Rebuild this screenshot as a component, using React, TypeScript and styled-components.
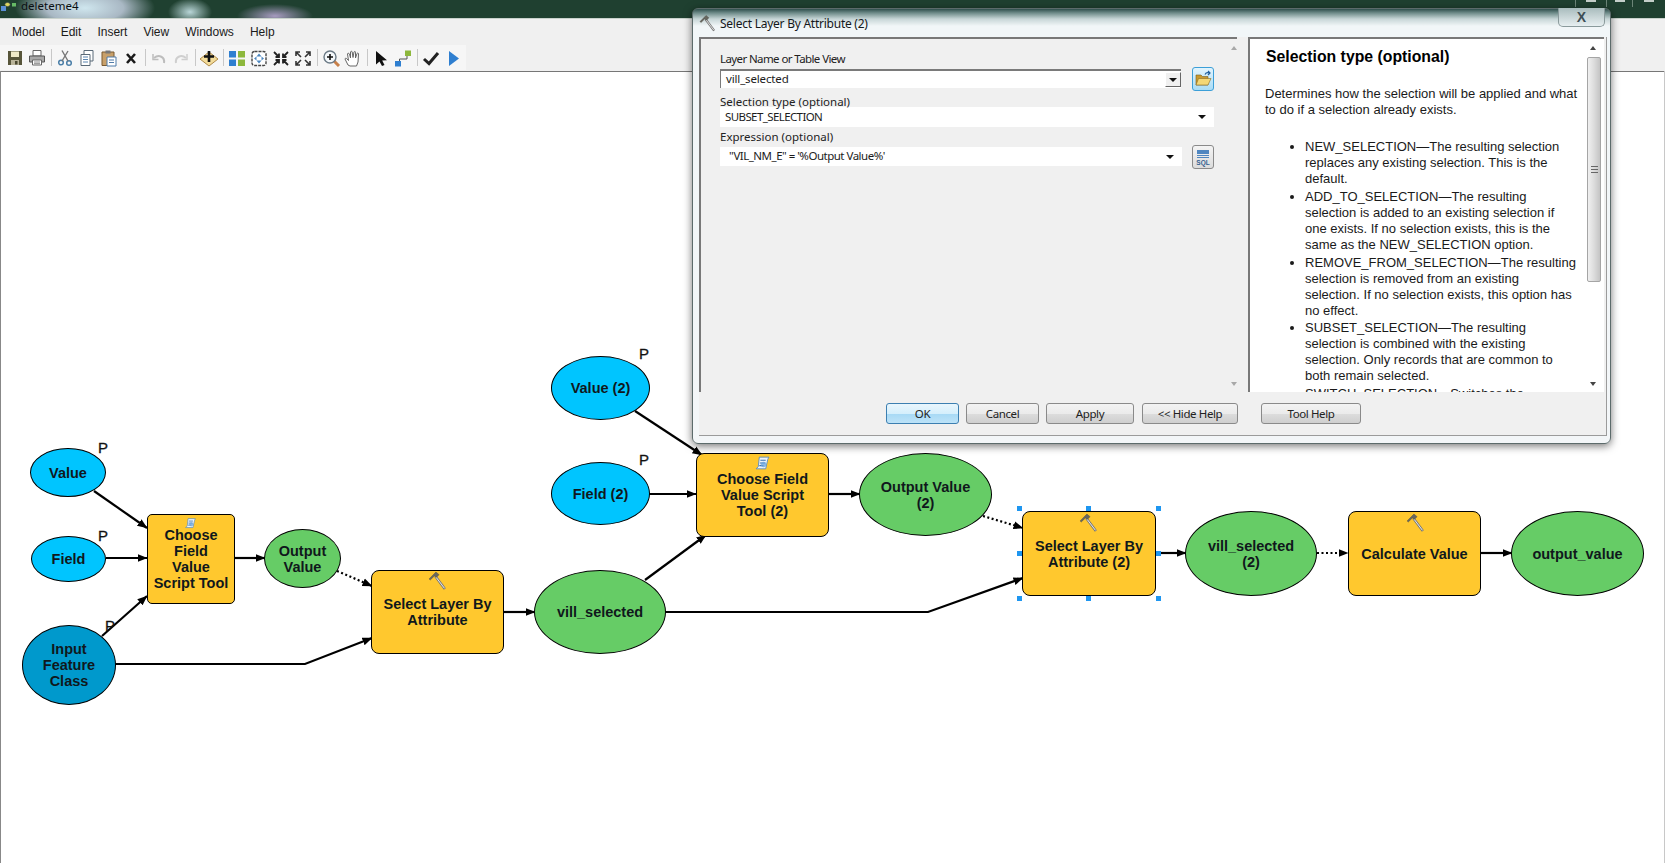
import React from 'react';
import styled, { createGlobalStyle, css } from 'styled-components';

const CANVAS_TOP = 71;

const GlobalStyle = createGlobalStyle`
  html, body { margin: 0; padding: 0; background: #fff; overflow: hidden; }
  body { font-family: "Liberation Sans", Arial, sans-serif; }
`;

const Page = styled.div`
  position: relative;
  width: 1665px;
  height: 863px;
  display: flex;
  flex-direction: column;
  overflow: hidden;
`;

const TitleBar = styled.div`
  height: 18px;
  flex: none;
  display: flex;
  align-items: flex-start;
  border-bottom: 1px solid #c9d2cc;
  background:
    radial-gradient(ellipse 22px 14px at 190px 12px, #b9d6d8 0%, rgba(185, 214, 216, 0) 100%),
    radial-gradient(ellipse 38px 12px at 275px 16px, #a79bc0 0%, rgba(167, 155, 192, 0) 100%),
    radial-gradient(ellipse 70px 26px at 85px 8px, #cfe6ee 0%, #a9b8c4 55%, rgba(90, 120, 110, 0) 100%),
    #1f4030;
`;

const AppIcon = styled.svg`
  width: 17px;
  height: 12px;
  margin-left: 1px;
  flex: none;
`;

const TitleText = styled.span`
  font: 11.5px/12px "Noto Sans", sans-serif;
  margin-left: 3px;
  color: #0a0f12;
`;

const WinControls = styled.div`
  margin-left: auto;
  display: flex;
  height: 7px;
`;

const WinControl = styled.div<{ $w: number }>`
  width: ${p => p.$w}px;
  border-left: 1px solid #6c8578;
  display: flex;
  justify-content: center;
`;

const WinGlyph = styled.div`
  width: 10px;
  height: 2px;
  background: #c4cec9;
`;

const MenuBar = styled.div`
  height: 26px;
  flex: none;
  background: #f0f0f0;
  display: flex;
  align-items: center;
  padding-left: 12px;
  gap: 16px;
  font: 12px "Liberation Sans", Arial, sans-serif;
  color: #1a1a1a;
`;

const ToolBar = styled.div`
  height: 26px;
  flex: none;
  background: #f0f0f0;
  display: flex;
`;

const ToolStrip = styled.div`
  display: flex;
  align-items: center;
  height: 25px;
  padding: 0 4px;
  width: 466px;
  box-sizing: border-box;
  background: #f6f6f6;
`;

const ToolIcon = styled.svg`
  width: 22px;
  height: 18px;
  flex: none;
`;

const ToolSep = styled.div`
  width: 6px;
  height: 17px;
  flex: none;
  background: linear-gradient(#c8c8c8, #c8c8c8) center / 1px 100% no-repeat;
`;

const Canvas = styled.div`
  position: relative;
  flex: 1;
  background: #fff;
  box-shadow: inset 1px 0 #888, inset -1px 0 #c8c8c8, inset 0 1px #767676;
`;

const Wires = styled.svg`
  position: absolute;
  left: 0;
  top: 0;
  width: 1665px;
  height: 792px;
`;

const nodeColors = {
  param: '#00c5ff',
  input: '#0099cc',
  output: '#66cc66',
  tool: '#ffc82e',
};

interface BoxProps {
  $x: number;
  $y: number;
  $w: number;
  $h: number;
}

const placed = css<BoxProps>`
  position: absolute;
  left: ${p => p.$x}px;
  top: ${p => p.$y - CANVAS_TOP}px;
  width: ${p => p.$w}px;
  height: ${p => p.$h}px;
`;

const Node = styled.div<BoxProps & { $kind: keyof typeof nodeColors; $round: string }>`
  ${placed}
  box-sizing: border-box;
  display: flex;
  align-items: center;
  justify-content: center;
  text-align: center;
  white-space: pre-line;
  border: 1px solid #000;
  border-radius: ${p => p.$round};
  background: ${p => nodeColors[p.$kind]};
  font: bold 14.5px/16px "Liberation Sans", Arial, sans-serif;
  color: #10181c;
`;

const PMark = styled.span<{ $x: number; $y: number }>`
  position: absolute;
  left: ${p => p.$x}px;
  top: ${p => p.$y - CANVAS_TOP}px;
  font: 15px/14px "Liberation Sans", Arial, sans-serif;
  -webkit-text-stroke: 0.3px #111;
  color: #111;
`;

const NodeGlyph = styled.svg<{ $x: number; $y: number; $s: number }>`
  position: absolute;
  left: ${p => p.$x - p.$s / 2}px;
  top: ${p => p.$y - CANVAS_TOP - p.$s / 2}px;
  width: ${p => p.$s}px;
  height: ${p => p.$s}px;
`;

const Handle = styled.div<{ $x: number; $y: number }>`
  position: absolute;
  left: ${p => p.$x - 2.5}px;
  top: ${p => p.$y - CANVAS_TOP - 2.5}px;
  width: 5px;
  height: 5px;
  background: #1e96f0;
`;

const Dialog = styled.div`
  position: absolute;
  left: 692px;
  top: 8px;
  width: 919px;
  height: 436px;
  box-sizing: border-box;
  border: 1px solid #5c6b6b;
  border-radius: 6px;
  padding: 0 3px 7px 6px;
  display: flex;
  flex-direction: column;
  box-shadow: 0 2px 8px rgba(0, 0, 0, 0.55);
  background: linear-gradient(#2f4f4c 0, #6f8c8a 4px, #c7d6d7 10px, #f1f6f8 17px, #f3f6f8 100%);
`;

const DialogTitle = styled.div`
  height: 28px;
  flex: none;
  display: flex;
  align-items: center;
  font: 12px "Noto Sans", sans-serif;
  letter-spacing: -0.25px;
  color: #14181a;
  gap: 4px;
`;

const TitleHammer = styled.svg`
  width: 17px;
  height: 18px;
  flex: none;
`;

const CloseButton = styled.div`
  position: absolute;
  left: 865px;
  top: -1px;
  width: 47px;
  height: 19px;
  box-sizing: border-box;
  border: 1px solid #8a9a9c;
  border-top: none;
  border-radius: 0 0 5px 5px;
  background: linear-gradient(#a9bcbd, #e7eff1);
  display: flex;
  align-items: center;
  justify-content: center;
  font: bold 14px/1 "Liberation Sans", Arial, sans-serif;
  color: #3e4e55;
`;

const DialogBody = styled.div`
  flex: 1;
  display: flex;
  flex-direction: column;
  background: #f0f0f0;
  border-bottom: 1px solid #9b9b9b;
  border-right: 1px solid #9b9b9b;
  box-sizing: border-box;
`;

const Panels = styled.div`
  height: 355px;
  flex: none;
  display: flex;
`;

const FormPane = styled.div`
  width: 538px;
  flex: none;
  display: flex;
  box-sizing: border-box;
  border-top: 2px solid #787878;
  border-left: 2px solid #787878;
`;

const Form = styled.div`
  flex: 1;
  padding: 13px 0 0 19px;
  font: 11.5px "Noto Sans", sans-serif;
  color: #222;
`;

const FieldLabel = styled.div<{ $gap: number; $track?: number }>`
  position: relative;
  z-index: 1;
  height: 14px;
  line-height: 14px;
  margin-top: ${p => p.$gap}px;
  letter-spacing: ${p => p.$track ?? 0}px;
`;

const FieldRow = styled.div<{ $gap: number }>`
  display: flex;
  align-items: center;
  margin-top: ${p => p.$gap}px;
  width: 494px;
  justify-content: space-between;
`;

const Combo = styled.div<{ $w: number; $h: number; $sunken?: boolean }>`
  width: ${p => p.$w}px;
  height: ${p => p.$h}px;
  box-sizing: border-box;
  background: #fff;
  display: flex;
  align-items: center;
  padding: 0 5px 0 5px;
  justify-content: space-between;
  font-size: 11.5px;
  color: #1c1c1c;
  ${p => p.$sunken && css`
    border-top: 2px solid #7a7a7a;
    border-left: 1px solid #7a7a7a;
    padding-right: 0;
  `}
`;

const ComboValue = styled.span<{ $indent?: number; $track: number }>`
  padding-left: ${p => p.$indent ?? 0}px;
  margin-top: -2px;
  white-space: pre;
  letter-spacing: ${p => p.$track}px;
`;

const Caret = styled.span`
  width: 0;
  height: 0;
  margin-right: 3px;
  border-left: 4px solid transparent;
  border-right: 4px solid transparent;
  border-top: 4px solid #111;
`;

const CaretButton = styled.span`
  width: 16px;
  height: 15px;
  box-sizing: border-box;
  display: flex;
  align-items: center;
  justify-content: center;
  background: #f0f0f0;
  border-right: 1px solid #666;
  border-bottom: 1px solid #666;
  border-top: 1px solid #fff;
  border-left: 1px solid #fff;
  padding-left: 3px;
`;

const IconButton = styled.div<{ $active?: boolean }>`
  width: 22px;
  height: 24px;
  margin: -3px 0;
  box-sizing: border-box;
  border: 1px solid ${p => (p.$active ? '#3c9fd8' : '#8a8a8a')};
  border-radius: 3px;
  display: flex;
  align-items: center;
  justify-content: center;
  background: ${p => (p.$active ? 'linear-gradient(#e2f4fd, #a9dcf6)' : 'linear-gradient(#f4f4f4, #dcdcdc)')};
`;

const ScrollColumn = styled.div<{ $w: number }>`
  width: ${p => p.$w}px;
  flex: none;
  position: relative;
`;

const ScrollArrow = styled.span<{ $down?: boolean; $dim?: boolean; $left: number; $at: number }>`
  position: absolute;
  left: ${p => p.$left}px;
  ${p => (p.$down ? `bottom: ${p.$at}px;` : `top: ${p.$at}px;`)}
  width: 0;
  height: 0;
  border-left: 3.5px solid transparent;
  border-right: 3.5px solid transparent;
  ${p => {
    const color = p.$dim ? '#a8a8a8' : '#444';
    return p.$down ? `border-top: 4px solid ${color};` : `border-bottom: 4px solid ${color};`;
  }}
`;

const Splitter = styled.div`
  width: 11px;
  flex: none;
`;

const HelpPane = styled.div`
  width: 356px;
  flex: none;
  display: flex;
  background: #fff;
  box-sizing: border-box;
  border-top: 2px solid #787878;
  border-left: 2px solid #787878;
`;

const HelpText = styled.div`
  flex: 1;
  overflow: hidden;
  padding: 8px 0 0 15px;
  font: 13px/16px "Liberation Sans", Arial, sans-serif;
  color: #1a1a1a;
  white-space: pre-line;
`;

const HelpHeading = styled.div`
  font: bold 15.8px/20px "Liberation Sans", Arial, sans-serif;
  color: #000;
  margin-left: 1px;
`;

const HelpPara = styled.p`
  margin: 19px 0 0;
`;

const HelpList = styled.ul`
  margin: 21px 0 0;
  padding: 0 0 0 40px;
`;

const HelpItem = styled.li`
  margin-bottom: 1.8px;
`;

const ScrollThumb = styled.div`
  position: absolute;
  left: 1px;
  top: 18px;
  width: 14px;
  height: 225px;
  box-sizing: border-box;
  border: 1px solid #a5a5a5;
  border-radius: 2px;
  background: linear-gradient(90deg, #f0f0f0, #dcdcdc 50%, #c4c4c4);
  display: flex;
  align-items: center;
  justify-content: center;
`;

const Grip = styled.div`
  width: 7px;
  height: 7px;
  background: repeating-linear-gradient(#666 0 1px, transparent 1px 3px);
`;

const Footer = styled.div`
  flex: 1;
  display: flex;
  align-items: center;
  padding: 0 0 1px 179px;
`;

const DlgButton = styled.div<{ $w: number; $gap: number; $primary?: boolean }>`
  width: ${p => p.$w}px;
  height: 21px;
  margin-left: ${p => p.$gap}px;
  box-sizing: border-box;
  border: 1px solid ${p => (p.$primary ? '#3c7fb1' : '#8a8a8a')};
  border-radius: 3px;
  display: flex;
  align-items: center;
  justify-content: center;
  font: 11.5px "Noto Sans", sans-serif;
  color: #222;
  letter-spacing: -0.4px;
  background: ${p => (p.$primary
    ? 'linear-gradient(#e9f6fd 0, #d5effc 50%, #a7d9f5 51%, #bde3f8 100%)'
    : 'linear-gradient(#f3f3f3 0, #ebebeb 50%, #dddddd 51%, #cfcfcf 100%)')};
`;

const Hammer = () => (
  <>
    <path d="M7 5 L16 17" stroke="#777" strokeWidth={2.4} />
    <path d="M7.4 5.6 L15.6 16.4" stroke="#efefef" strokeWidth={0.9} />
    <path d="M1 7.5 L7.5 1 L10.5 3.5 L8 6 L6 4.8 L2.2 8.5 Z" fill="#66665f" stroke="#46463f" strokeWidth={0.4} />
  </>
);

const Scroll = () => (
  <>
    <path d="M5 2 H14 L13 4 L11 13 H2 L4 11 Z" fill="#eef4fb" stroke="#4f86c0" strokeWidth={0.8} />
    <path d="M6 5 H11 M5.5 7.5 H10.5 M5 10 H9" stroke="#3a72b0" strokeWidth={1} />
    <circle cx="9" cy="9" r="2.6" fill="#6ba4dc" opacity={0.75} />
  </>
);

const lines: { d: string; dotted?: boolean }[] = [
  { d: 'M94 491 L147 528' },
  { d: 'M106 558 L147 558' },
  { d: 'M102 636 L147 596' },
  { d: 'M115 664 L305 664 L372 638' },
  { d: 'M235 558 L265 558' },
  { d: 'M337 571 L372 586', dotted: true },
  { d: 'M503 612 L535 612' },
  { d: 'M645 580 L706 535' },
  { d: 'M665 612 L928 612 L1023 578' },
  { d: 'M635 411 L702 455' },
  { d: 'M649 494 L696 494' },
  { d: 'M829 494 L860 494' },
  { d: 'M983 516 L1023 528', dotted: true },
  { d: 'M1155 553 L1186 553' },
  { d: 'M1317 553 L1348 553', dotted: true },
  { d: 'M1480 553 L1512 553' },
];

const ELLIPSE = '50%';

const nodes: { label: string; x: number; y: number; w: number; h: number; kind: keyof typeof nodeColors; round: string }[] = [
  { label: 'Value', x: 30, y: 448, w: 76, h: 49, kind: 'param', round: ELLIPSE },
  { label: 'Field', x: 31, y: 536, w: 75, h: 46, kind: 'param', round: ELLIPSE },
  { label: 'Input\nFeature\nClass', x: 22, y: 625, w: 94, h: 80, kind: 'input', round: ELLIPSE },
  { label: 'Choose\nField\nValue\nScript Tool', x: 147, y: 514, w: 88, h: 90, kind: 'tool', round: '5px' },
  { label: 'Output\nValue', x: 264, y: 529, w: 77, h: 59, kind: 'output', round: ELLIPSE },
  { label: 'Select Layer By\nAttribute', x: 371, y: 570, w: 133, h: 84, kind: 'tool', round: '8px' },
  { label: 'Value (2)', x: 551, y: 356, w: 99, h: 64, kind: 'param', round: ELLIPSE },
  { label: 'Field (2)', x: 551, y: 462, w: 99, h: 63, kind: 'param', round: ELLIPSE },
  { label: 'vill_selected', x: 534, y: 570, w: 132, h: 84, kind: 'output', round: ELLIPSE },
  { label: 'Choose Field\nValue Script\nTool (2)', x: 696, y: 453, w: 133, h: 84, kind: 'tool', round: '8px' },
  { label: 'Output Value\n(2)', x: 859, y: 453, w: 133, h: 83, kind: 'output', round: ELLIPSE },
  { label: 'Select Layer By\nAttribute (2)', x: 1022, y: 511, w: 134, h: 85, kind: 'tool', round: '8px' },
  { label: 'vill_selected\n(2)', x: 1185, y: 511, w: 132, h: 85, kind: 'output', round: ELLIPSE },
  { label: 'Calculate Value', x: 1348, y: 511, w: 133, h: 85, kind: 'tool', round: '8px' },
  { label: 'output_value', x: 1511, y: 511, w: 133, h: 85, kind: 'output', round: ELLIPSE },
];

const pMarks = [
  { x: 98, y: 441 },
  { x: 98, y: 529 },
  { x: 105, y: 619 },
  { x: 639, y: 347 },
  { x: 639, y: 453 },
];

const handles = [
  { x: 1019, y: 508 }, { x: 1088, y: 508 }, { x: 1158, y: 508 },
  { x: 1019, y: 553 }, { x: 1158, y: 553 },
  { x: 1019, y: 598 }, { x: 1088, y: 598 }, { x: 1158, y: 598 },
];

const helpItems = [
  'NEW_SELECTION—The resulting selection\nreplaces any existing selection. This is the\ndefault.',
  'ADD_TO_SELECTION—The resulting\nselection is added to an existing selection if\none exists. If no selection exists, this is the\nsame as the NEW_SELECTION option.',
  'REMOVE_FROM_SELECTION—The resulting\nselection is removed from an existing\nselection. If no selection exists, this option has\nno effect.',
  'SUBSET_SELECTION—The resulting\nselection is combined with the existing\nselection. Only records that are common to\nboth remain selected.',
  'SWITCH_SELECTION—Switches the\nselection.',
];

const menuItems = ['Model', 'Edit', 'Insert', 'View', 'Windows', 'Help'];

// toolbar icons, drawn on a 22x18 box
const toolGroups: React.ReactNode[][] = [
  [
    <g key="save">
      <path d="M4 2 H18 V16 H4 Z" fill="#57553a" />
      <path d="M7 2.5 H15 V8 H7 Z" fill="#efe9c8" />
      <path d="M7 11 H15 V16 H7 Z" fill="#b9b49a" />
      <path d="M11 12 H13.5 V15.5 H11 Z" fill="#4a4830" />
    </g>,
    <g key="print">
      <path d="M7 1.5 H15 V7 H7 Z" fill="#fff" stroke="#666" />
      <path d="M3.5 7 H18.5 V13 H3.5 Z" fill="#a8a8a8" stroke="#555" />
      <path d="M6.5 11 H15.5 V16 H6.5 Z" fill="#fff" stroke="#666" />
      <path d="M8 13 H14 M8 14.7 H14" stroke="#888" />
    </g>,
  ],
  [
    <g key="cut" fill="none" stroke="#4b7fa8">
      <circle cx="7" cy="13.5" r="2.3" strokeWidth="1.5" />
      <circle cx="15" cy="14" r="2.3" strokeWidth="1.5" />
      <path d="M8 12 L14 2 M14 12 L8 1.5" stroke="#777" strokeWidth="1.4" />
    </g>,
    <g key="copy">
      <path d="M8 1.5 H17 V12 H8 Z" fill="#fff" stroke="#5a6a78" />
      <path d="M5 5.5 H14 V16.5 H5 Z" fill="#fff" stroke="#5a6a78" />
      <path d="M7 8 H12 M7 10.5 H12 M7 13 H12" stroke="#5a85b0" />
    </g>,
    <g key="paste">
      <path d="M4 3 H16 V16.5 H4 Z" fill="#c8a06a" stroke="#7a5a30" />
      <path d="M7.5 1.5 H12.5 V4.5 H7.5 Z" fill="#777" />
      <path d="M9 8 H18 V17 H9 Z" fill="#fff" stroke="#4f7ba8" />
      <path d="M11 11 H16 M11 13.5 H16" stroke="#4f7ba8" />
    </g>,
    <path key="del" d="M7 5 L15 14 M15 5 L7 14" stroke="#1a1a1a" strokeWidth="2.6" />,
  ],
  [
    <g key="undo" fill="none" stroke="#bdbdbd" strokeWidth="2">
      <path d="M16 14 C17 8 11 5 6 9" />
      <path d="M5 5 V10.5 H10.5" strokeWidth="1.5" />
    </g>,
    <g key="redo" fill="none" stroke="#cfcfcf" strokeWidth="2">
      <path d="M6 14 C5 8 11 5 16 9" />
      <path d="M17 5 V10.5 H11.5" strokeWidth="1.5" />
    </g>,
  ],
  [
    <g key="add">
      <path d="M11 3 L20 10 L11 17 L2 10 Z" fill="#f3dc9a" stroke="#b08a48" />
      <path d="M11 2 V13 M6 7.5 H16" stroke="#111" strokeWidth="2.6" />
    </g>,
  ],
  [
    <g key="grid">
      <rect x="3" y="2" width="7" height="6.5" fill="#2f7fd0" />
      <rect x="12" y="2" width="7" height="6.5" fill="#8db83c" />
      <rect x="3" y="10.5" width="7" height="6.5" fill="#2f7fd0" />
      <rect x="12" y="10.5" width="7" height="6.5" fill="#8db83c" />
    </g>,
    <g key="fit">
      <rect x="4" y="2.5" width="14" height="14" rx="2.5" fill="#fff" stroke="#444" strokeWidth="1.4" strokeDasharray="3 1" />
      <path d="M11 4.5 L13.5 7.5 H8.5 Z M11 14.5 L13.5 11.5 H8.5 Z M6 9.5 L8.5 7.5 V11.5 Z M16 9.5 L13.5 7.5 V11.5 Z" fill="#4a86c0" />
    </g>,
    <path key="zin" d="M4 3 L9 8 M9 4.5 V8 H5.5 M18 3 L13 8 M13 4.5 V8 H16.5 M4 16 L9 11 M9 14.5 V11 H5.5 M18 16 L13 11 M13 14.5 V11 H16.5" stroke="#222" strokeWidth="1.8" fill="none" />,
    <path key="zout" d="M9 8 L4 3 M4 7 V3 H8 M13 8 L18 3 M18 7 V3 H14 M9 11 L4 16 M4 12 V16 H8 M13 11 L18 16 M18 12 V16 H14" stroke="#333" strokeWidth="1.6" fill="none" />,
  ],
  [
    <g key="mag">
      <path d="M14 12 L19 17" stroke="#c8804a" strokeWidth="3" />
      <circle cx="10" cy="8" r="6" fill="#f4f8fb" stroke="#6b7a86" strokeWidth="1.4" />
      <path d="M10 5 V11 M7 8 H13" stroke="#111" strokeWidth="1.6" />
    </g>,
    <path key="hand" d="M6 16 L3 10 C3 9 4.5 9 5 10 L6.5 11.5 L5.5 5 C5.5 4 7 4 7.5 5 L8.5 9 L8.5 3 C8.8 2 10 2 10.2 3 L11 8.5 L12 3 C12.3 2.2 13.5 2.3 13.5 3.2 L13.5 9 L15 4.5 C15.5 3.8 16.7 4 16.5 5 L16 13 L14.5 17 H8 Z" fill="#fff" stroke="#666" strokeWidth="1" />,
  ],
  [
    <path key="arrow" d="M6 2 L6 15.5 L9.5 12.5 L12 17 L14.5 16 L12.2 11.5 L17 11.2 Z" fill="#111" />,
    <g key="conn">
      <path d="M7.5 14 V10 H15 V6" fill="none" stroke="#555" strokeWidth="1" />
      <rect x="3" y="12" width="6" height="5.5" fill="#2f7fd0" />
      <rect x="13" y="1.5" width="6" height="5.5" fill="#8db83c" />
    </g>,
  ],
  [
    <path key="check" d="M4 10 L9 14.5 L18 4" fill="none" stroke="#222" strokeWidth="3" />,
    <path key="run" d="M7 2 L17 9.5 L7 17 Z" fill="#2f7fd0" />,
  ],
];

function App() {
  return (
    <Page>
      <GlobalStyle />
      <TitleBar>
        <AppIcon viewBox="0 0 17 12">
          <rect x="0" y="6" width="5" height="5" fill="#5a8fd8" />
          <ellipse cx="6.5" cy="4.5" rx="2.6" ry="2" fill="#dcd860" stroke="#445" strokeWidth="0.5" />
          <rect x="11" y="3" width="4" height="3.5" fill="#66bb66" />
        </AppIcon>
        <TitleText>deleteme4</TitleText>
        <WinControls>
          <WinControl $w={30}><WinGlyph /></WinControl>
          <WinControl $w={25}><WinGlyph /></WinControl>
          <WinControl $w={32}><WinGlyph /></WinControl>
        </WinControls>
      </TitleBar>
      <MenuBar>
        {menuItems.map(m => <span key={m}>{m}</span>)}
      </MenuBar>
      <ToolBar>
        <ToolStrip>
          {toolGroups.map((group, i) => (
            <React.Fragment key={i}>
              {i > 0 && <ToolSep />}
              {group.map((g, j) => <ToolIcon key={j} viewBox="0 0 22 18">{g}</ToolIcon>)}
            </React.Fragment>
          ))}
        </ToolStrip>
      </ToolBar>
      <Canvas>
        <Wires viewBox={`0 ${CANVAS_TOP} 1665 792`}>
          <defs>
            <marker id="head" markerUnits="userSpaceOnUse" markerWidth="11" markerHeight="11" refX="9.5" refY="5" orient="auto">
              <path d="M0 1 L10 5 L0 9 Z" fill="#000" />
            </marker>
          </defs>
          {lines.map(l => (
            <path
              key={l.d}
              d={l.d}
              fill="none"
              stroke="#000"
              strokeWidth={2.2}
              strokeDasharray={l.dotted ? '2 2.5' : undefined}
              markerEnd="url(#head)"
            />
          ))}
        </Wires>
        {pMarks.map(p => <PMark key={`${p.x}-${p.y}`} $x={p.x} $y={p.y}>P</PMark>)}
        {nodes.map(n => (
          <Node key={n.label} $x={n.x} $y={n.y} $w={n.w} $h={n.h} $kind={n.kind} $round={n.round}>
            {n.label}
          </Node>
        ))}
        <NodeGlyph $x={190} $y={523} $s={13} viewBox="0 0 16 16"><Scroll /></NodeGlyph>
        <NodeGlyph $x={762} $y={463} $s={17} viewBox="0 0 16 16"><Scroll /></NodeGlyph>
        <NodeGlyph $x={437} $y={580} $s={19} viewBox="0 0 18 18"><Hammer /></NodeGlyph>
        <NodeGlyph $x={1088} $y={522} $s={19} viewBox="0 0 18 18"><Hammer /></NodeGlyph>
        <NodeGlyph $x={1415} $y={522} $s={19} viewBox="0 0 18 18"><Hammer /></NodeGlyph>
        {handles.map(h => <Handle key={`${h.x}-${h.y}`} $x={h.x} $y={h.y} />)}
      </Canvas>

      <Dialog>
        <DialogTitle>
          <TitleHammer viewBox="0 0 18 18"><Hammer /></TitleHammer>
          Select Layer By Attribute (2)
        </DialogTitle>
        <CloseButton>X</CloseButton>
        <DialogBody>
          <Panels>
            <FormPane>
              <Form>
                <FieldLabel $gap={0} $track={-0.6}>Layer Name or Table View</FieldLabel>
                <FieldRow $gap={3}>
                  <Combo $w={461} $h={19} $sunken>
                    <ComboValue $track={-0.15}>vill_selected</ComboValue>
                    <CaretButton><Caret /></CaretButton>
                  </Combo>
                  <IconButton $active>
                    <svg width="18" height="18" viewBox="0 0 18 18">
                      <path d="M2 5 H7 L8.5 6.5 H14 V15 H2 Z" fill="#c8992e" stroke="#7a5f20" strokeWidth="0.6" />
                      <path d="M2 15 L4.5 8.5 H17 L14 15 Z" fill="#f4d776" stroke="#8a6c25" strokeWidth="0.6" />
                      <path d="M11 4.5 C12 2.5 14 2.5 15.5 3 M14 1 L16 3 L14 5" fill="none" stroke="#1f5f9f" strokeWidth="1.2" />
                    </svg>
                  </IconButton>
                </FieldRow>
                <FieldLabel $gap={7}>Selection type (optional)</FieldLabel>
                <FieldRow $gap={-2}>
                  <Combo $w={494} $h={20}>
                    <ComboValue $track={-0.6}>SUBSET_SELECTION</ComboValue>
                    <Caret />
                  </Combo>
                </FieldRow>
                <FieldLabel $gap={3}>Expression (optional)</FieldLabel>
                <FieldRow $gap={3}>
                  <Combo $w={462} $h={19}>
                    <ComboValue $indent={4} $track={-0.5}>{'"VIL_NM_E" = \'%Output Value%\''}</ComboValue>
                    <Caret />
                  </Combo>
                  <IconButton>
                    <svg width="18" height="20" viewBox="0 0 18 20">
                      <path d="M3 3 H15 V7 H3 Z" fill="#4f86c0" />
                      <path d="M3 8.5 H15 M3 10.5 H15" stroke="#4f86c0" />
                      <text x="9" y="18" textAnchor="middle" fontSize="6.5" fontWeight="bold" fontFamily="Liberation Sans" fill="#345f8f">SQL</text>
                    </svg>
                  </IconButton>
                </FieldRow>
              </Form>
              <ScrollColumn $w={14}>
                <ScrollArrow $dim $left={8} $at={7} />
                <ScrollArrow $dim $down $left={8} $at={6} />
              </ScrollColumn>
            </FormPane>
            <Splitter />
            <HelpPane>
              <HelpText>
                <HelpHeading>Selection type (optional)</HelpHeading>
                <HelpPara>{'Determines how the selection will be applied and what\nto do if a selection already exists.'}</HelpPara>
                <HelpList>
                  {helpItems.map(item => <HelpItem key={item}>{item}</HelpItem>)}
                </HelpList>
              </HelpText>
              <ScrollColumn $w={18}>
                <ScrollArrow $left={4} $at={7} />
                <ScrollThumb><Grip /></ScrollThumb>
                <ScrollArrow $down $left={4} $at={6} />
              </ScrollColumn>
            </HelpPane>
          </Panels>
          <Footer>
            <DlgButton $w={73} $gap={8} $primary>OK</DlgButton>
            <DlgButton $w={73} $gap={7}>Cancel</DlgButton>
            <DlgButton $w={88} $gap={7}>Apply</DlgButton>
            <DlgButton $w={96} $gap={8}>{'<< Hide Help'}</DlgButton>
            <DlgButton $w={100} $gap={23}>Tool Help</DlgButton>
          </Footer>
        </DialogBody>
      </Dialog>
    </Page>
  );
}

export default App;
